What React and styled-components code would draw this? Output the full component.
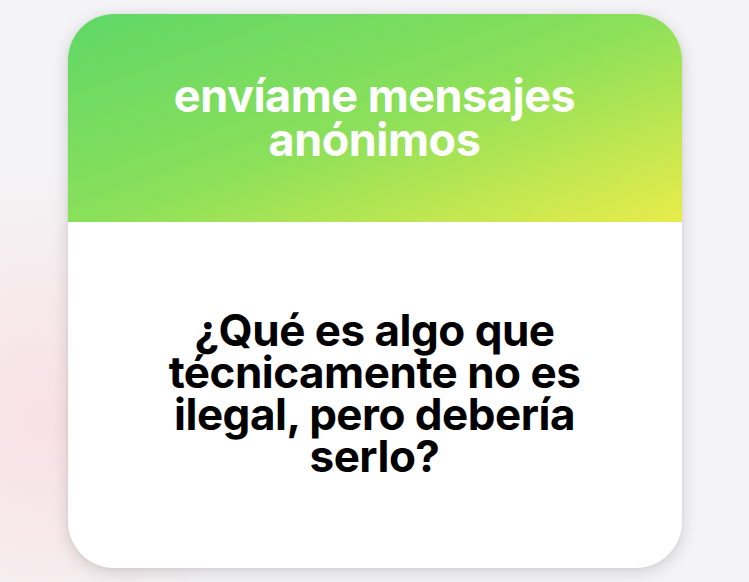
import React from "react";
import styled, { createGlobalStyle } from "styled-components";

const Global = createGlobalStyle`
  html, body { margin: 0; padding: 0; }
  body {
    width: 749px;
    height: 582px;
    overflow: hidden;
    background:
      radial-gradient(ellipse 220px 260px at 40px 420px, rgba(250, 220, 224, 0.8), rgba(250, 220, 224, 0) 100%),
      #f4f4f6;
    font-family: Inter, "Liberation Sans", sans-serif;
  }
`;

const Page = styled.div`
  display: flex;
  justify-content: center;
  padding-top: 14px;
`;

const Card = styled.div`
  width: 614px;
  height: 554px;
  border-radius: 46px;
  overflow: hidden;
  background: #fff;
  display: flex;
  flex-direction: column;
  box-shadow: 0 4px 18px rgba(0, 0, 0, 0.14), 0 1px 4px rgba(0, 0, 0, 0.06);
`;

const Header = styled.div`
  height: 208px;
  display: flex;
  align-items: center;
  justify-content: center;
  background: linear-gradient(160deg, #5fd767 0%, #8be05a 50%, #e9ec4b 100%);
`;

const Title = styled.h1`
  margin: 0;
  color: #fff;
  font-size: 45px;
  line-height: 44px;
  font-weight: 700;
  text-align: center;
  letter-spacing: -0.5px;
  width: 440px;
`;

const Body = styled.div`
  flex: 1;
  display: flex;
  align-items: center;
  justify-content: center;
  padding-bottom: 4px;
`;

const Question = styled.p`
  margin: 0;
  color: #000;
  font-size: 44px;
  line-height: 42px;
  font-weight: 700;
  text-align: center;
  letter-spacing: -0.5px;
  width: 460px;
`;

export default function App() {
  return (
    <>
      <Global />
      <Page>
        <Card>
          <Header>
            <Title>envíame mensajes anónimos</Title>
          </Header>
          <Body>
            <Question>¿Qué es algo que técnicamente no es ilegal, pero debería serlo?</Question>
          </Body>
        </Card>
      </Page>
    </>
  );
}
